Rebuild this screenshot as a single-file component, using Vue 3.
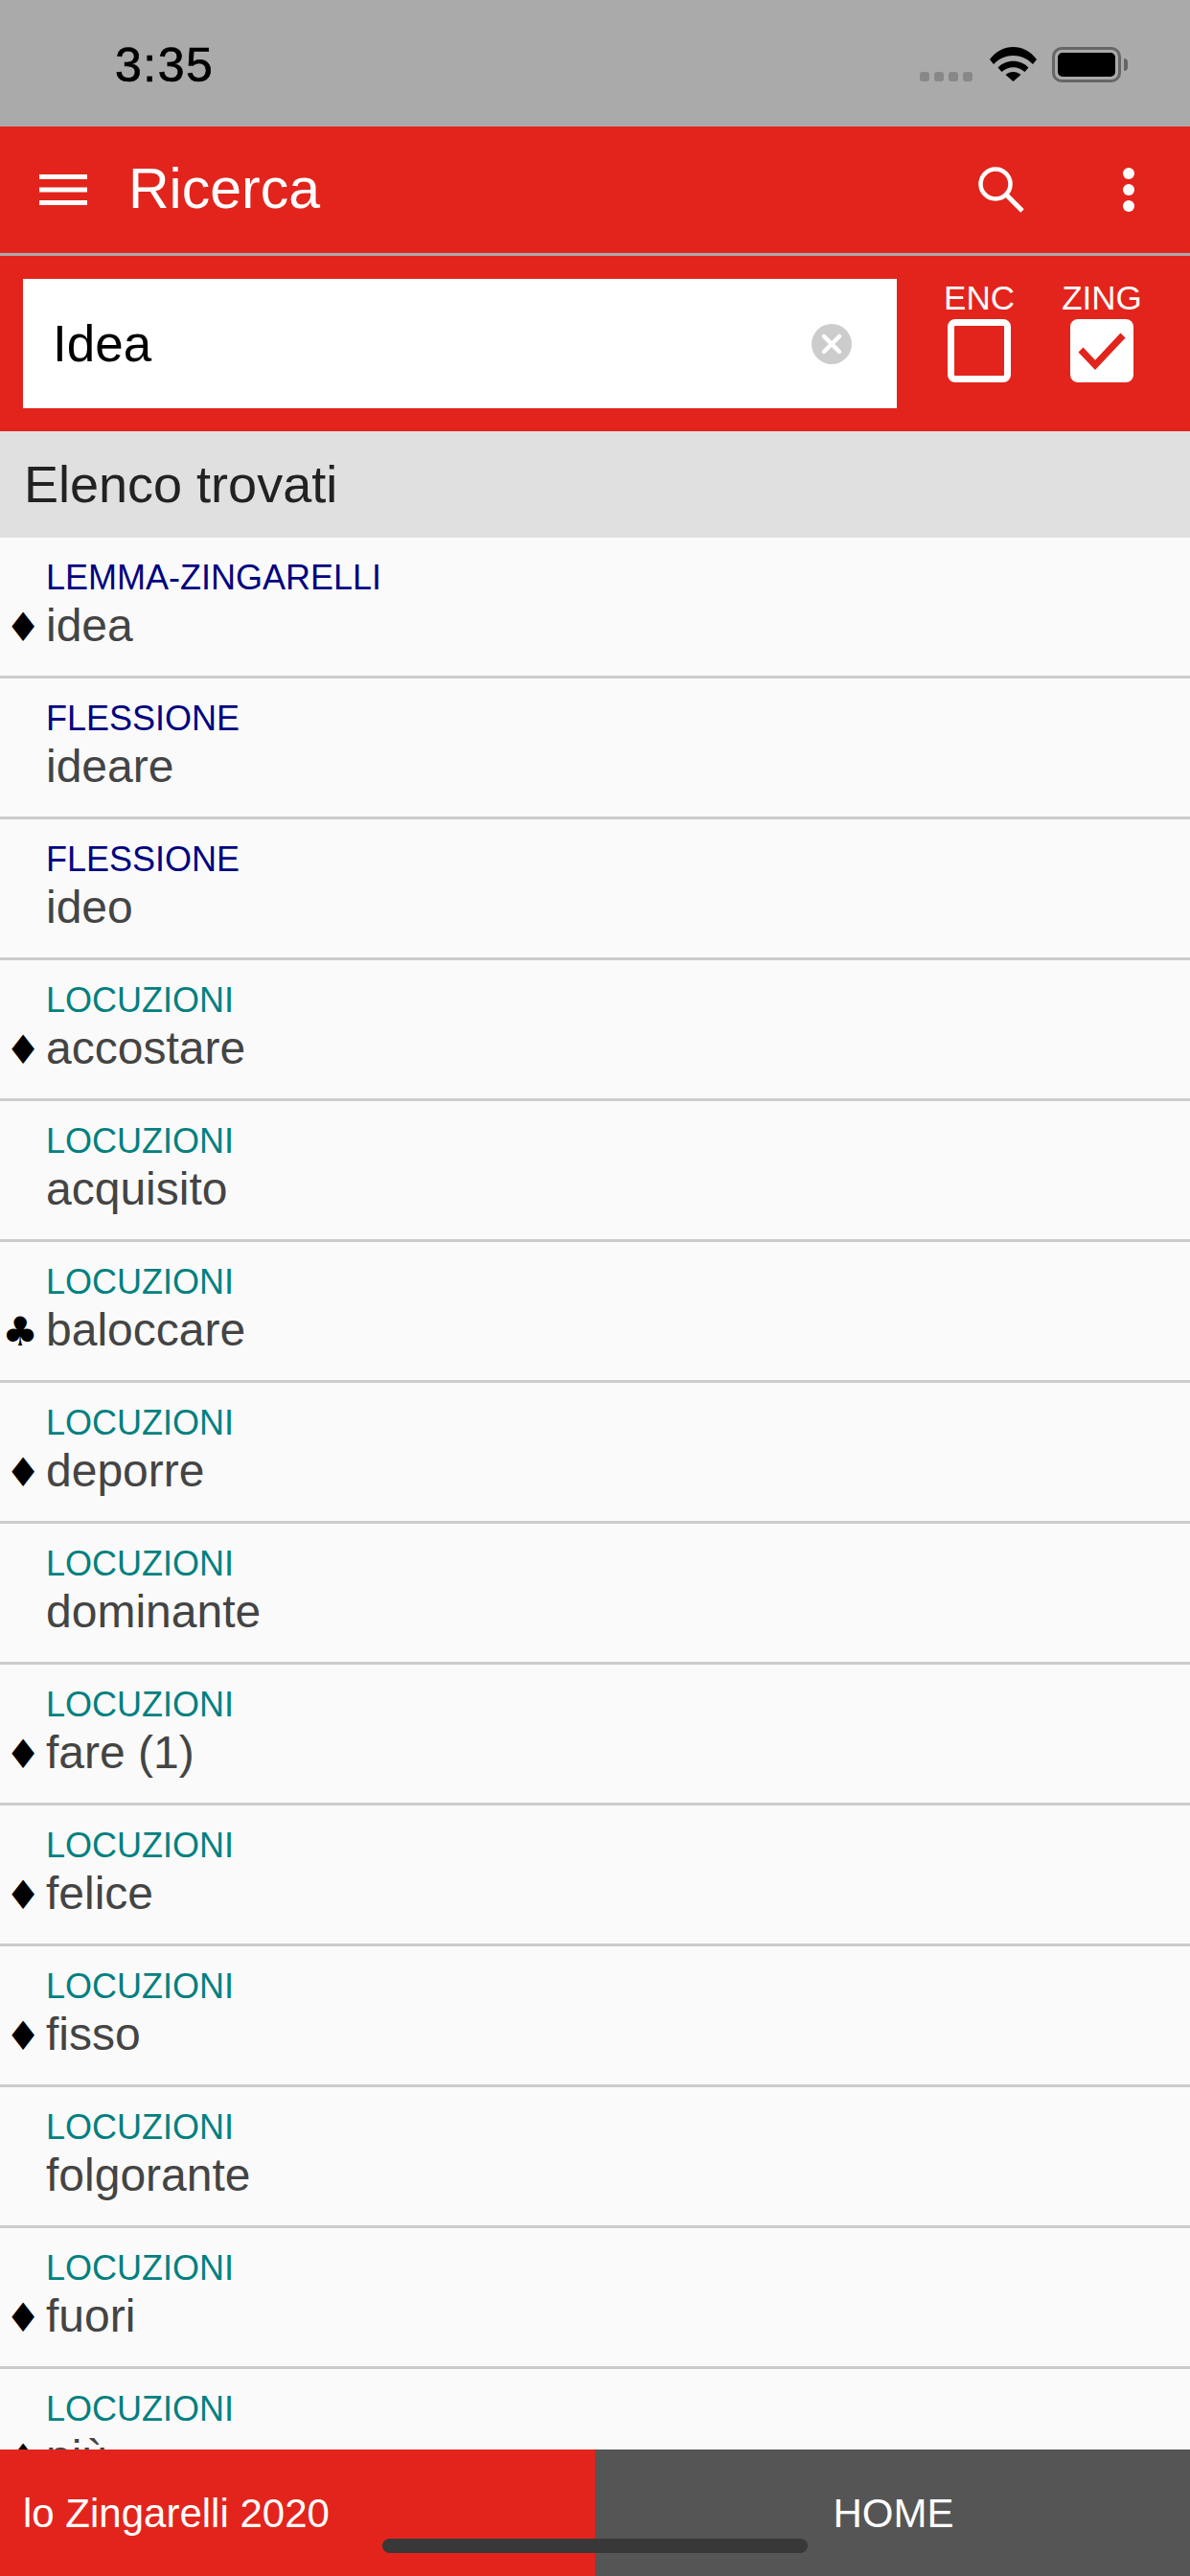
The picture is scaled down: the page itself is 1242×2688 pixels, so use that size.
<template>
  <div class="screen">
    <!-- status bar -->
    <div class="status">
      <span class="time">3:35</span>
      <div class="status-right">
        <div class="signal"><i></i><i></i><i></i><i></i></div>
        <svg class="wifi" width="49" height="36" viewBox="0 0 49 36">
          <path d="M0 13C13-4.300 36-4.300 49 13L45 18C33.500 6 15.500 6 4 18Z" fill="#000" />
          <path d="M8.500 21.500C17 12.500 32 12.500 40.500 21.500L36.500 26C29.500 19.500 19.500 19.500 12.500 26Z" fill="#000" />
          <path d="M16.500 29C21 25 28 25 32.500 29L24.500 36Z" fill="#000" />
        </svg>
        <div class="battery"><div class="battery-fill"></div></div>
      </div>
    </div>

    <!-- app bar -->
    <header class="appbar">
      <svg class="menu" width="50" height="32" viewBox="0 0 50 32">
        <path d="M0 2.500H50M0 16H50M0 29.500H50" stroke="#fff" stroke-width="5" fill="none" />
      </svg>
      <h1 class="title">Ricerca</h1>
      <svg class="search" width="48" height="48" viewBox="0 0 48 48">
        <circle cx="18" cy="18" r="15.500" stroke="#fff" stroke-width="4.500" fill="none" />
        <path d="M29 29L46 46" stroke="#fff" stroke-width="5" fill="none" />
      </svg>
      <div class="dots"><i></i><i></i><i></i></div>
    </header>

    <!-- search row -->
    <div class="searchrow">
      <div class="input">
        <span class="input-text">Idea</span>
        <svg class="clear" width="42" height="42" viewBox="0 0 42 42">
          <circle cx="21" cy="21" r="21" fill="#ccc" />
          <path d="M13 13L29 29M29 13L13 29" stroke="#fff" stroke-width="4.500" stroke-linecap="round" />
        </svg>
      </div>
      <div class="check-col enc">
        <span class="check-label">ENC</span>
        <div class="box"></div>
      </div>
      <div class="check-col zing">
        <span class="check-label">ZING</span>
        <div class="box on">
          <svg width="66" height="66" viewBox="0 0 66 66">
            <path d="M11 32L26 48L55 17" stroke="#e3241c" stroke-width="7" fill="none" />
          </svg>
        </div>
      </div>
    </div>

    <div class="section">Elenco trovati</div>

    <!-- result list -->
    <ul class="list">
      <li v-for="(item, index) in items" :key="index" class="row">
        <span class="mark" :class="{ club: item.mark === '♣' }">{{ item.mark }}</span>
        <div class="row-text">
          <span class="kind" :class="item.kind === 'LOCUZIONI' ? 'teal' : 'navy'">{{ item.kind }}</span>
          <span class="word">{{ item.word }}</span>
        </div>
      </li>
    </ul>

    <footer class="footer">
      <div class="foot-left">lo Zingarelli 2020</div>
      <div class="foot-right">HOME</div>
      <div class="homebar"></div>
    </footer>
  </div>
</template>

<script setup>
const items = [
  { kind: 'LEMMA-ZINGARELLI', word: 'idea', mark: '♦' },
  { kind: 'FLESSIONE', word: 'ideare', mark: '' },
  { kind: 'FLESSIONE', word: 'ideo', mark: '' },
  { kind: 'LOCUZIONI', word: 'accostare', mark: '♦' },
  { kind: 'LOCUZIONI', word: 'acquisito', mark: '' },
  { kind: 'LOCUZIONI', word: 'baloccare', mark: '♣' },
  { kind: 'LOCUZIONI', word: 'deporre', mark: '♦' },
  { kind: 'LOCUZIONI', word: 'dominante', mark: '' },
  { kind: 'LOCUZIONI', word: 'fare (1)', mark: '♦' },
  { kind: 'LOCUZIONI', word: 'felice', mark: '♦' },
  { kind: 'LOCUZIONI', word: 'fisso', mark: '♦' },
  { kind: 'LOCUZIONI', word: 'folgorante', mark: '' },
  { kind: 'LOCUZIONI', word: 'fuori', mark: '♦' },
  { kind: 'LOCUZIONI', word: 'più', mark: '♦' },
]
</script>

<style>
html, body {
  margin: 0;
  background: #fafafa;
}
</style>

<style scoped>
.screen {
  width: 1242px;
  height: 2688px;
  display: flex;
  flex-direction: column;
  overflow: hidden;
  font-family: "Liberation Sans", Arial, sans-serif;
  background: #fafafa;
}

.status {
  height: 132px;
  flex: none;
  background: #aaa;
  display: flex;
  align-items: flex-start;
  justify-content: space-between;
  box-sizing: border-box;
  padding: 0 72px 0 120px;
}
.time {
  font-size: 50px;
  line-height: 56px;
  margin-top: 40px;
  letter-spacing: 1.500px;
  color: #000;
  -webkit-text-stroke: 0.7px #000;
}
.status-right {
  display: flex;
  align-items: flex-end;
  margin-top: 49px;
  height: 37px;
}
.signal {
  display: flex;
  gap: 5px;
  margin-bottom: 1px;
  margin-right: 18px;
}
.signal i {
  width: 10px;
  height: 10px;
  border-radius: 3px;
  background: #888;
}
.wifi {
  margin-bottom: 1px;
  margin-right: 16px;
}
.battery {
  position: relative;
  width: 72px;
  height: 37px;
  box-sizing: border-box;
  border: 3px solid #666;
  border-radius: 10px;
  padding: 3px;
}
.battery::after {
  content: "";
  position: absolute;
  right: -10px;
  top: 9px;
  width: 4px;
  height: 13px;
  background: #666;
  border-radius: 0 4px 4px 0;
}
.battery-fill {
  height: 100%;
  background: #000;
  border-radius: 5px;
}

.appbar {
  height: 135px;
  flex: none;
  box-sizing: border-box;
  border-bottom: 3px solid #aaa;
  background: #e3241c;
  display: flex;
  align-items: center;
  padding-left: 41px;
}
.title {
  margin: 0 0 3px 43px;
  font-size: 59px;
  font-weight: 400;
  color: #fff;
  flex: 1;
}
.search {
  margin-right: 103px;
  margin-left: 2px;
}
.dots {
  display: flex;
  flex-direction: column;
  gap: 5px;
  margin-right: 58px;
}
.dots i {
  width: 12px;
  height: 12px;
  border-radius: 50%;
  background: #fff;
}

.searchrow {
  height: 183px;
  flex: none;
  box-sizing: border-box;
  background: #e3241c;
  padding: 24px 0 0 24px;
  display: flex;
  align-items: flex-start;
}
.input {
  width: 912px;
  height: 135px;
  background: #fff;
  display: flex;
  align-items: center;
  justify-content: space-between;
  box-sizing: border-box;
  padding: 0 47px 0 31px;
}
.input-text {
  font-size: 53px;
  color: #000;
}
.check-col {
  width: 100px;
  display: flex;
  flex-direction: column;
  align-items: center;
}
.enc {
  margin-left: 36px;
}
.zing {
  margin-left: 28px;
}
.check-label {
  font-size: 35px;
  line-height: 36px;
  color: #fff;
  margin-top: 2px;
  margin-bottom: 4px;
}
.box {
  width: 66px;
  height: 66px;
  box-sizing: border-box;
  border: 7px solid #fff;
  border-radius: 8px;
}
.box.on {
  background: #fff;
  border: none;
}

.section {
  height: 111px;
  flex: none;
  box-sizing: border-box;
  background: #e0e0e0;
  padding-left: 25px;
  font-size: 54px;
  line-height: 110px;
  color: #222;
}

.list {
  flex: 1;
  min-height: 0;
  overflow: hidden;
  margin: 0;
  padding: 0;
  list-style: none;
}
.row {
  height: 147px;
  box-sizing: border-box;
  border-bottom: 3px solid #ccc;
  display: flex;
}
.mark {
  width: 48px;
  flex: none;
  text-align: center;
  font-family: "DejaVu Sans", sans-serif;
  font-size: 42px;
  color: #000;
  padding-top: 70px;
  line-height: 48px;
}
.mark.club {
  box-sizing: border-box;
  padding-right: 6px;
}
.row-text {
  display: flex;
  flex-direction: column;
  padding-top: 21px;
}
.kind {
  font-size: 36px;
  line-height: 42px;
}
.navy {
  color: #000080;
}
.teal {
  color: #008080;
}
.word {
  font-size: 48px;
  line-height: 56px;
  margin-top: 1px;
  color: #444;
}

.footer {
  position: relative;
  height: 132px;
  flex: none;
  display: flex;
  font-size: 42px;
  color: #fff;
}
.foot-left {
  width: 621px;
  box-sizing: border-box;
  background: #e3241c;
  padding: 43px 0 0 24px;
}
.foot-right {
  width: 621px;
  background: #555;
  text-align: center;
  padding-top: 43px;
  padding-left: 2px;
  box-sizing: border-box;
}
.homebar {
  position: absolute;
  left: 399px;
  top: 93px;
  width: 444px;
  height: 15px;
  border-radius: 8px;
  background: #383838;
}
</style>
